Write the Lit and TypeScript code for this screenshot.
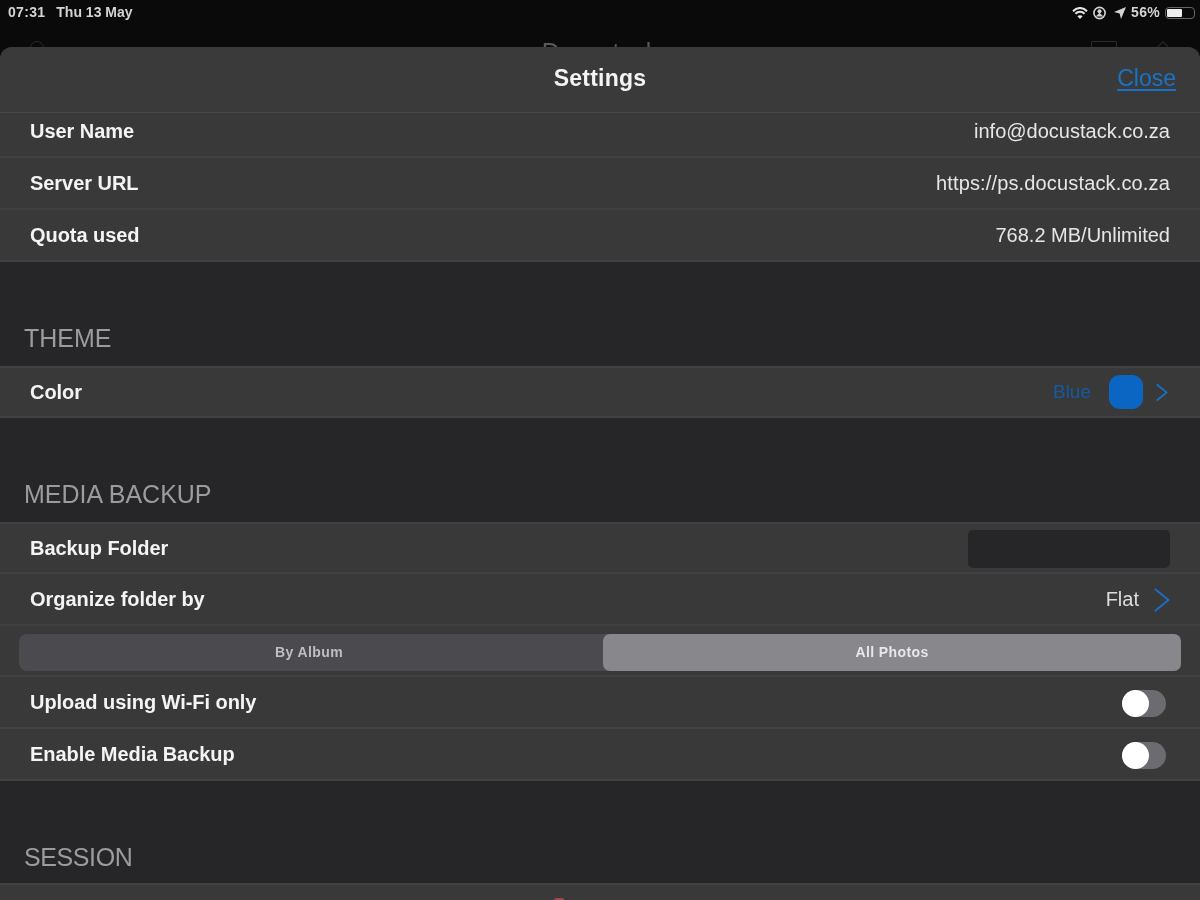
import { LitElement, html, css } from "lit";
import { customElement } from "lit/decorators.js";

const chevron = (cls: string) => html`<svg class=${cls} viewBox="0 0 16 24" fill="none" stroke="currentColor" stroke-width="2" stroke-linecap="round" stroke-linejoin="round"><path d="M1.5 1.5L14.5 12 1.5 22.5"/></svg>`;

@customElement("app-root")
export class AppRoot extends LitElement {
  static styles = css`
    :host { display: block; width: 1200px; height: 900px; overflow: hidden; background: #0a0a0a; font-family: "Liberation Sans", Arial, sans-serif; color: #f2f2f2; }
    .status { height: 47px; position: relative; overflow: hidden; display: flex; align-items: flex-start; justify-content: space-between; padding: 5px 5px 0 8px; box-sizing: border-box; font-size: 14px; line-height: 15px; color: #d4d4d4; font-weight: 700; filter: blur(.5px); }
    .left { display: flex; gap: 11px; }
    .left span:first-child { letter-spacing: .3px; }
    .right { display: flex; align-items: center; height: 15px; }
    .right svg { display: block; }
    .wifi { margin-right: 5px; }
    .vpn { margin-right: 8px; }
    .arrow { margin-right: 5px; }
    .pct { margin-right: 5px; letter-spacing: .3px; }
    .battery { width: 30px; height: 12px; box-sizing: border-box; border: 1px solid #666; border-radius: 4px; padding: 1px; }
    .battery i { display: block; width: 15px; height: 100%; background: #eee; border-radius: 1px; }
    .behind { position: absolute; left: 0; right: 0; top: 40px; height: 24px; display: flex; justify-content: center; font-size: 25px; line-height: 24px; font-weight: 400; color: #5a5a5a; }
    .b1, .b2, .b3 { position: absolute; border: 1px solid #2c2c2c; box-sizing: border-box; }
    .b1 { left: 30px; top: 41px; width: 14px; height: 14px; border-radius: 50%; }
    .b2 { left: 1091px; top: 41px; width: 26px; height: 14px; border-radius: 1px; }
    .b3 { left: 1156px; top: 44px; width: 14px; height: 14px; transform: rotate(45deg); }
    .modal { height: 853px; background: #262628; border-radius: 12px 12px 0 0; overflow: hidden; display: flex; flex-direction: column; }
    .header { flex: none; height: 66px; box-sizing: border-box; background: #3a3a3b; border-bottom: 1px solid #484849; display: grid; grid-template-columns: 1fr auto 1fr; align-items: center; padding: 0 24px 2px; }
    .title { font-size: 23px; letter-spacing: .2px; font-weight: 700; color: #f4f4f4; filter: blur(.35px); }
    .close { grid-column: 3; justify-self: end; color: #1a73c5; font-size: 23px; text-decoration: underline; text-underline-offset: 3px; filter: blur(.35px); }
    .body { flex: 1; overflow: hidden; filter: blur(.4px); }
    .group { background: #39393a; }
    .row { height: 52px; box-sizing: border-box; display: flex; align-items: center; justify-content: space-between; padding: 1px 30px 0; border-bottom: 2px solid #414142; font-size: 20px; }
    .row.top { border-top: 2px solid #414142; padding-top: 0; }
    .row.short { height: 45px; padding-top: 0; padding-bottom: 6px; }
    .label { font-weight: 700; color: #f4f4f4; letter-spacing: -.05px; }
    .value { color: #e6e6e6; }
    .value.url { letter-spacing: .15px; }
    .heading { height: 104px; box-sizing: border-box; display: flex; align-items: flex-end; padding: 0 24px 12px; font-size: 25px; line-height: 32px; color: #9c9c9e; }
    .heading.last { height: 102px; padding-bottom: 10px; letter-spacing: -.4px; }
    .accent { display: flex; align-items: center; color: #15599f; font-size: 19px; }
    .swatch { width: 34px; height: 34px; border-radius: 11px; background: #0b66c3; margin: 0 13px 0 18px; }
    .chev { width: 16px; height: 24px; color: #1a6fbe; display: block; }
    .chev.small { width: 12px; height: 17px; margin-right: 2px; stroke-width: 2.6; }
    .field { width: 202px; height: 38px; border-radius: 5px; background: #262628; margin-top: 1px; }
    .flat { display: flex; align-items: center; gap: 15px; color: #dcdcdc; }
    .segrow { height: 51px; box-sizing: border-box; border-bottom: 2px solid #414142; padding: 8px 19px 4px; display: flex; align-items: stretch; }
    .seg { flex: 1; display: grid; grid-template-columns: 584px 1fr; background: #4b4b4f; border-radius: 8px; font-size: 14px; letter-spacing: .4px; font-weight: 700; color: #bfbfc2; }
    .seg div { display: flex; align-items: center; justify-content: center; border-radius: 7px; padding-bottom: 1px; }
    .seg .off { padding-right: 4px; }
    .seg .on { background: #87878c; color: #e8e8ea; }
    .toggle { width: 44px; height: 27px; border-radius: 14px; background: #6b6b70; display: flex; align-items: center; margin: 1px 4px 0 0; }
    .toggle i { width: 27px; height: 27px; border-radius: 50%; background: #fff; }
    .end { height: 20px; background: #39393a; border-top: 2px solid #414142; box-sizing: border-box; padding: 13px 82px 0 0; display: flex; justify-content: center; }
    .mark { width: 12px; height: 6px; border-radius: 4px 4px 0 0; background: #a8444a; }
  `;

  render() {
    return html`
      <div class="status">
        <div class="left"><span>07:31</span><span>Thu 13 May</span></div>
        <div class="behind">Docustack</div>
        <div class="b1"></div><div class="b2"></div><div class="b3"></div>
        <div class="right">
          <svg class="wifi" width="16" height="12" viewBox="0 0 16 12" fill="none" stroke="#e6e6e6" stroke-width="2"><path d="M1 4.2C5-.1 11-.1 15 4.2"/><path d="M3.4 6.8c2.6-2.6 6.6-2.6 9.2 0"/><path d="M8 12L5.4 9.2c1.5-1.2 3.7-1.2 5.2 0z" fill="#e6e6e6" stroke="none"/></svg>
          <svg class="vpn" width="13" height="14" viewBox="0 0 13 14"><circle cx="6.5" cy="7" r="5.6" fill="none" stroke="#d4d4d4" stroke-width="1.6"/><circle cx="6.5" cy="5.2" r="2" fill="#d4d4d4"/><path d="M2.6 10.6l3.9-3.9 3.9 3.9z" fill="#d4d4d4"/></svg>
          <svg class="arrow" width="12" height="12" viewBox="0 0 12 12" fill="#d4d4d4"><path d="M12 0L7 12 5.6 6.4 0 5z"/></svg>
          <span class="pct">56%</span>
          <div class="battery"><i></i></div>
        </div>
      </div>
      <div class="modal">
        <div class="header"><span></span><div class="title">Settings</div><div class="close">Close</div></div>
        <div class="body">
          <div class="group">
            <div class="row short"><span class="label">User Name</span><span class="value">info@docustack.co.za</span></div>
            <div class="row"><span class="label">Server URL</span><span class="value url">https://ps.docustack.co.za</span></div>
            <div class="row"><span class="label">Quota used</span><span class="value">768.2 MB/Unlimited</span></div>
          </div>
          <div class="heading">THEME</div>
          <div class="group">
            <div class="row top"><span class="label">Color</span>
              <div class="accent">Blue<div class="swatch"></div>${chevron("chev small")}</div>
            </div>
          </div>
          <div class="heading">MEDIA BACKUP</div>
          <div class="group">
            <div class="row top"><span class="label">Backup Folder</span><div class="field"></div></div>
            <div class="row"><span class="label">Organize folder by</span><div class="flat">Flat${chevron("chev")}</div></div>
            <div class="segrow"><div class="seg"><div class="off">By Album</div><div class="on">All Photos</div></div></div>
            <div class="row"><span class="label">Upload using Wi-Fi only</span><div class="toggle"><i></i></div></div>
            <div class="row"><span class="label">Enable Media Backup</span><div class="toggle"><i></i></div></div>
          </div>
          <div class="heading last">SESSION</div>
          <div class="end"><div class="mark"></div></div>
        </div>
      </div>
    `;
  }
}
